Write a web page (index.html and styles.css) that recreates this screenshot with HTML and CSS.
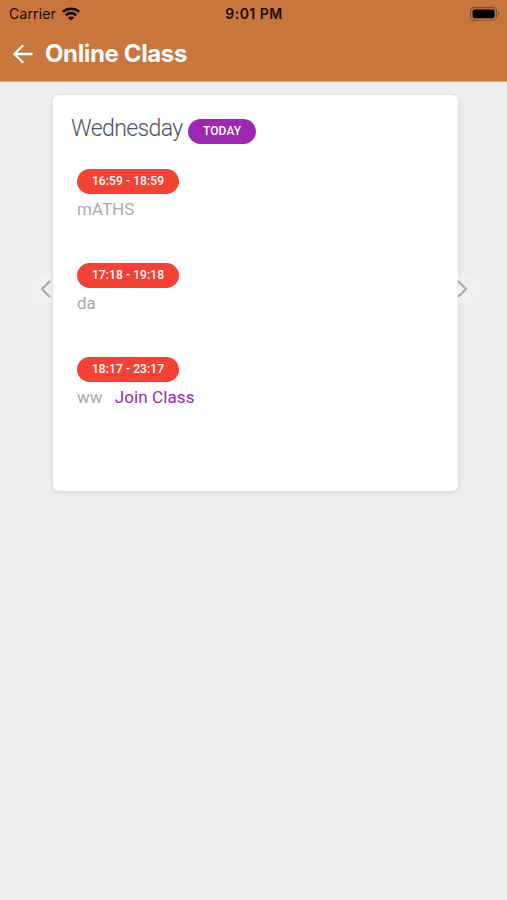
FILE: index.html
```html
<!DOCTYPE html>
<html lang="en">
<head>
    <meta charset="UTF-8">
    <meta name="viewport" content="width=device-width, initial-scale=1.0">
    <title>Online Class</title>
    <link rel="stylesheet" href="styles.css">
</head>
<body>
    <header class="header">
        <div class="status">
            <div class="carrier">
                <span>Carrier</span>
                <svg class="wifi" viewBox="0 0 18 14" width="18" height="14">
                    <path d="M.8 4.9C5.5.7 12.5.7 17.2 4.9M3.8 8.2C6.8 5.4 11.2 5.4 14.2 8.2" fill="none" stroke="#160b05" stroke-width="2.6"/>
                    <path d="M9 13.6L5.8 10.5C7.5 9 10.5 9 12.2 10.5z" fill="#160b05"/>
                </svg>
            </div>
            <div class="clock">9:01 PM</div>
            <div class="power">
                <svg viewBox="0 0 31 14" width="31" height="14">
                    <rect x=".6" y=".6" width="26" height="12.6" rx="3.6" fill="none" stroke="#83502f" stroke-width="1.1"/>
                    <rect x="2.6" y="2.5" width="22" height="8.8" rx="1.8" fill="#000"/>
                    <path d="M28.2 4.8c1.8.7 1.8 3.5 0 4.2z" fill="#83502f"/>
                </svg>
            </div>
        </div>
        <div class="nav">
            <svg class="back" viewBox="0 0 20 20" width="20" height="20">
                <path d="M19.5 10H1.8M10.2 1.2L1.4 10l8.8 8.8" fill="none" stroke="#fff" stroke-width="2.3"/>
            </svg>
            <h1>Online Class</h1>
        </div>
    </header>
    <main class="slider">
        <div class="arrow prev">
            <svg viewBox="0 0 11 18" width="11" height="18">
                <path d="M10 1L2 9l8 8" fill="none" stroke="#aaa" stroke-width="2.2"/>
            </svg>
        </div>
        <section class="card">
            <div class="day">
                <h2>Wednesday</h2>
                <span class="badge today">TODAY</span>
            </div>
            <ul>
                <li>
                    <span class="badge">16:59 - 18:59</span>
                    <p>mATHS</p>
                </li>
                <li>
                    <span class="badge">17:18 - 19:18</span>
                    <p>da</p>
                </li>
                <li>
                    <span class="badge">18:17 - 23:17</span>
                    <p>ww <a href="#">Join Class</a></p>
                </li>
            </ul>
        </section>
        <div class="arrow next">
            <svg viewBox="0 0 11 18" width="11" height="18">
                <path d="M1 1l8 8-8 8" fill="none" stroke="#aaa" stroke-width="2.2"/>
            </svg>
        </div>
    </main>
</body>
</html>
```

FILE: styles.css
```css
*{
    margin: 0;
    padding: 0;
    box-sizing: border-box;
}
body{
    min-height: 100vh;
    background: #eee;
    font-family: Roboto, "Liberation Sans", sans-serif;
}
svg{
    display: block;
}
.header{
    height: 82px;
    background: #c9763e;
    border-bottom: 1px solid #d9a27c;
    font-family: Inter, "Liberation Sans", sans-serif;
}
.status{
    display: grid;
    grid-template-columns: 1fr auto 1fr;
    align-items: center;
    height: 27px;
    padding: 0 6px 0 9px;
    font-size: 14px;
    color: #160b05;
}
.carrier{
    display: flex;
    align-items: center;
    gap: 6px;
    letter-spacing: 0.15px;
}
.clock{
    margin-right: 2px;
    font-weight: 600;
    letter-spacing: 0.5px;
}
.power{
    display: flex;
    justify-content: flex-end;
}
.nav{
    display: flex;
    align-items: center;
    height: 53px;
    padding-left: 13px;
}
.nav h1{
    margin-left: 12px;
    font-size: 24px;
    font-weight: 700;
    letter-spacing: -0.37px;
    color: #fff;
}
.slider{
    display: flex;
    align-items: center;
    padding: 13px 13px 0 16px;
}
.arrow{
    display: flex;
    flex: none;
    width: 36px;
    height: 26px;
    align-items: center;
    margin-top: -8px;
}
.prev{
    justify-content: flex-end;
    padding-right: 1px;
    background: linear-gradient(to right, #eee, #f1f1f1);
}
.next{
    margin-left: -1px;
    background: linear-gradient(to left, #eee, #f1f1f1);
}
.card{
    flex: none;
    width: 405px;
    height: 396px;
    margin-left: 0.5px;
    padding: 19px 19px 0 18.5px;
    background: #fff;
    border-radius: 6px;
    box-shadow: 0 1px 5px rgba(0, 0, 0, 0.12);
}
.day{
    display: flex;
    height: 30px;
}
.day h2{
    margin-top: 1px;
    font-size: 23px;
    line-height: 28px;
    font-weight: 300;
    letter-spacing: -0.6px;
    color: #4a535f;
}
.badge{
    display: block;
    width: 102px;
    height: 25px;
    border-radius: 13px;
    background: #f44336;
    font-size: 12px;
    line-height: 25px;
    font-weight: 500;
    letter-spacing: 0.1px;
    text-align: center;
    color: #fff;
}
.today{
    width: 68px;
    margin: 5px 0 0 5.5px;
    background: #9c27b0;
}
ul{
    padding: 25px 0 0 6px;
    list-style: none;
}
li{
    height: 94px;
}
p{
    padding-top: 4px;
    font-size: 17px;
    line-height: 22px;
    font-weight: 400;
    color: #aaa;
}
p a{
    margin-left: 8px;
    letter-spacing: 0.1px;
    color: #9c27b0;
    text-decoration: none;
}
```
